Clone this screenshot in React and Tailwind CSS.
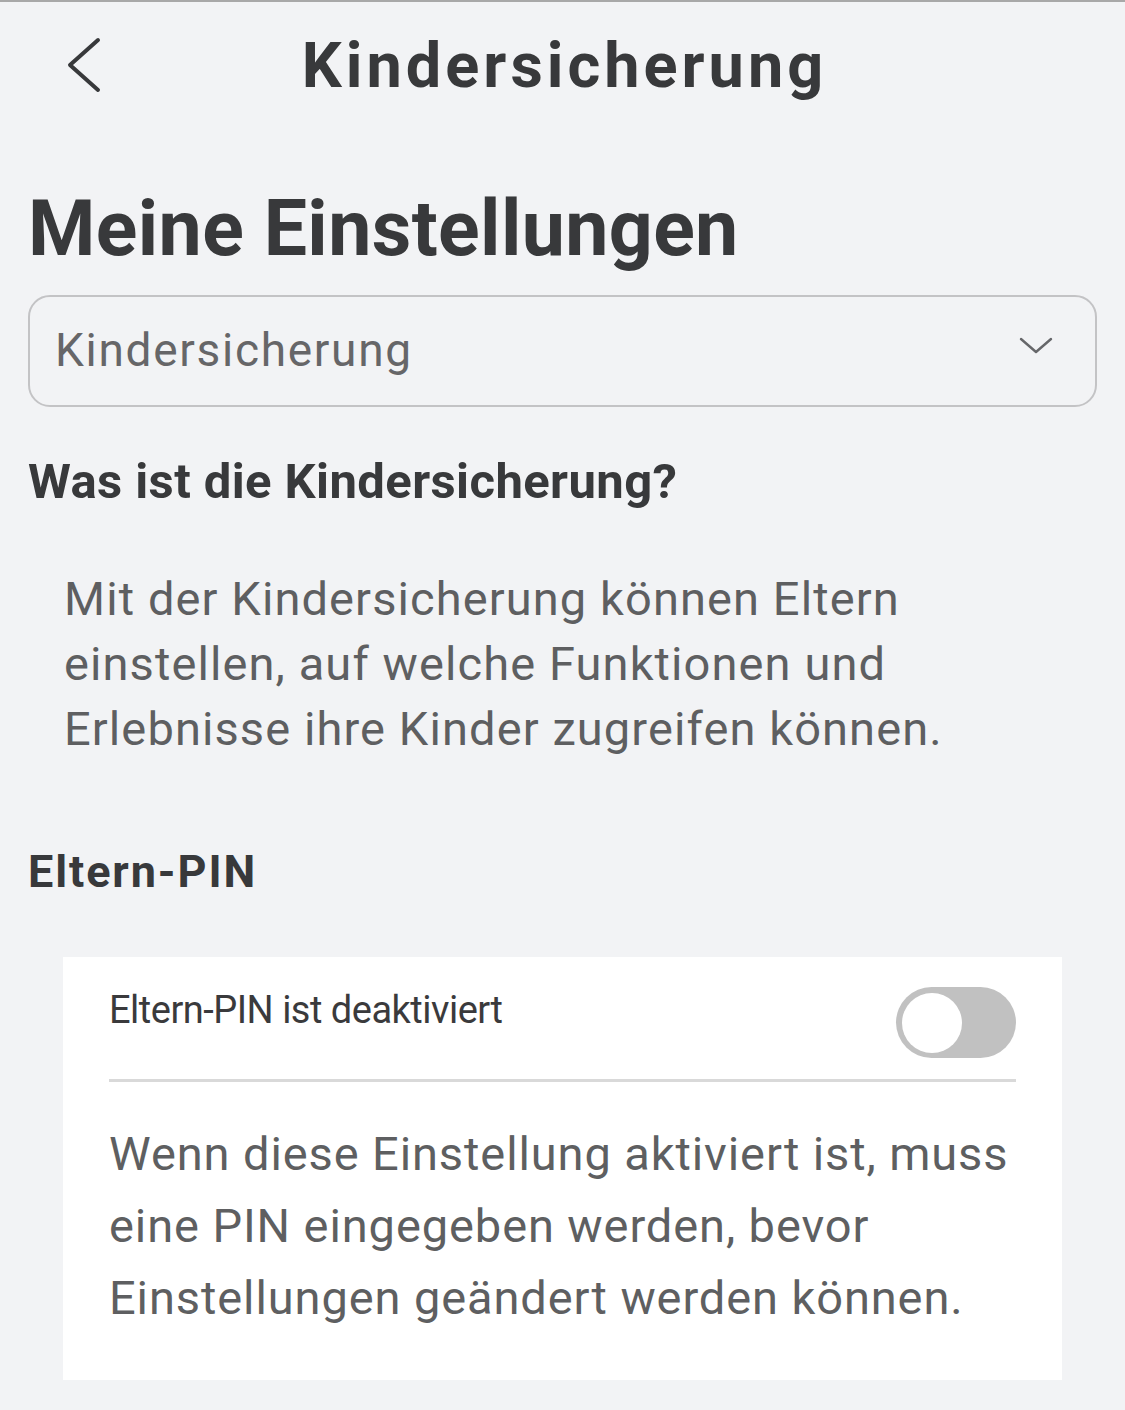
import React from 'react';

const BackIcon = ({ className }) => (
    <svg viewBox="0 0 36 58" className={className} fill="none" stroke="currentColor" strokeWidth="4" strokeLinecap="round" strokeLinejoin="round">
        <path d="M32 4 L4 29 L32 54" />
    </svg>
);

const App = () => {
    return (
        <div className="min-h-[1410px] w-[1125px] bg-[#f2f3f5] border-t-2 border-[#a8a8a8] font-['Roboto',sans-serif] text-[#38393b]">
            <header className="relative pt-[32px] flex justify-center">
                <button className="absolute left-[66px] top-[34px] text-[#38393b]">
                    <BackIcon className="w-[36px] h-[58px]" />
                </button>
                <h1 className="text-[63px] font-bold leading-none tracking-[4px] pl-[4px]">Kindersicherung</h1>
            </header>

            <main className="px-[28px] pt-[94px] pb-[30px]">
                <h2 className="text-[77px] font-bold leading-none tracking-[0.4px]">Meine Einstellungen</h2>

                <div className="mt-[27px] h-[112px] rounded-[22px] border-2 border-[#c3c3c5] flex items-center justify-between pl-[25px] pr-[42px]">
                    <span className="-mt-[3px] text-[46px] leading-none tracking-[1.7px] text-[#666668]">Kindersicherung</span>
                    <svg viewBox="0 0 34 17" className="w-[34px] h-[17px] -mt-[12px]" fill="none" stroke="#66676a" strokeWidth="2.4" strokeLinecap="round" strokeLinejoin="round">
                        <path d="M2 2 L17 15 L32 2" />
                    </svg>
                </div>

                <h3 className="mt-[50px] text-[49px] font-bold leading-none tracking-[0.4px]">Was ist die Kindersicherung?</h3>

                <p className="mt-[60px] pl-[36px] text-[47px] leading-[65px] tracking-[1.1px] text-[#5e5f61]">
                    Mit der Kindersicherung können Eltern<br />
                    einstellen, auf welche Funktionen und<br />
                    Erlebnisse ihre Kinder zugreifen können.
                </p>

                <h3 className="mt-[88px] text-[45px] font-bold leading-none tracking-[1.9px]">Eltern-PIN</h3>

                <section className="mt-[63px] ml-[35px] w-[999px] bg-white px-[46px] pt-[30px] pb-[46px]">
                    <div className="flex items-start justify-between">
                        <span className="mt-[4px] text-[38px] leading-none tracking-[-0.5px] text-[#3a3a3c]">Eltern-PIN ist deaktiviert</span>
                        <div className="w-[120px] h-[71px] rounded-full bg-[#c1c1c1] pl-[6px] flex items-center">
                            <div className="w-[60px] h-[60px] rounded-full bg-white" />
                        </div>
                    </div>
                    <div className="mt-[21px] h-[3px] bg-[#d9d9d9]" />
                    <p className="mt-[36px] text-[47px] leading-[72px] tracking-[0.9px] text-[#5e5f61]">
                        Wenn diese Einstellung aktiviert ist, muss<br />
                        eine PIN eingegeben werden, bevor<br />
                        Einstellungen geändert werden können.
                    </p>
                </section>
            </main>
        </div>
    );
};

export default App;
